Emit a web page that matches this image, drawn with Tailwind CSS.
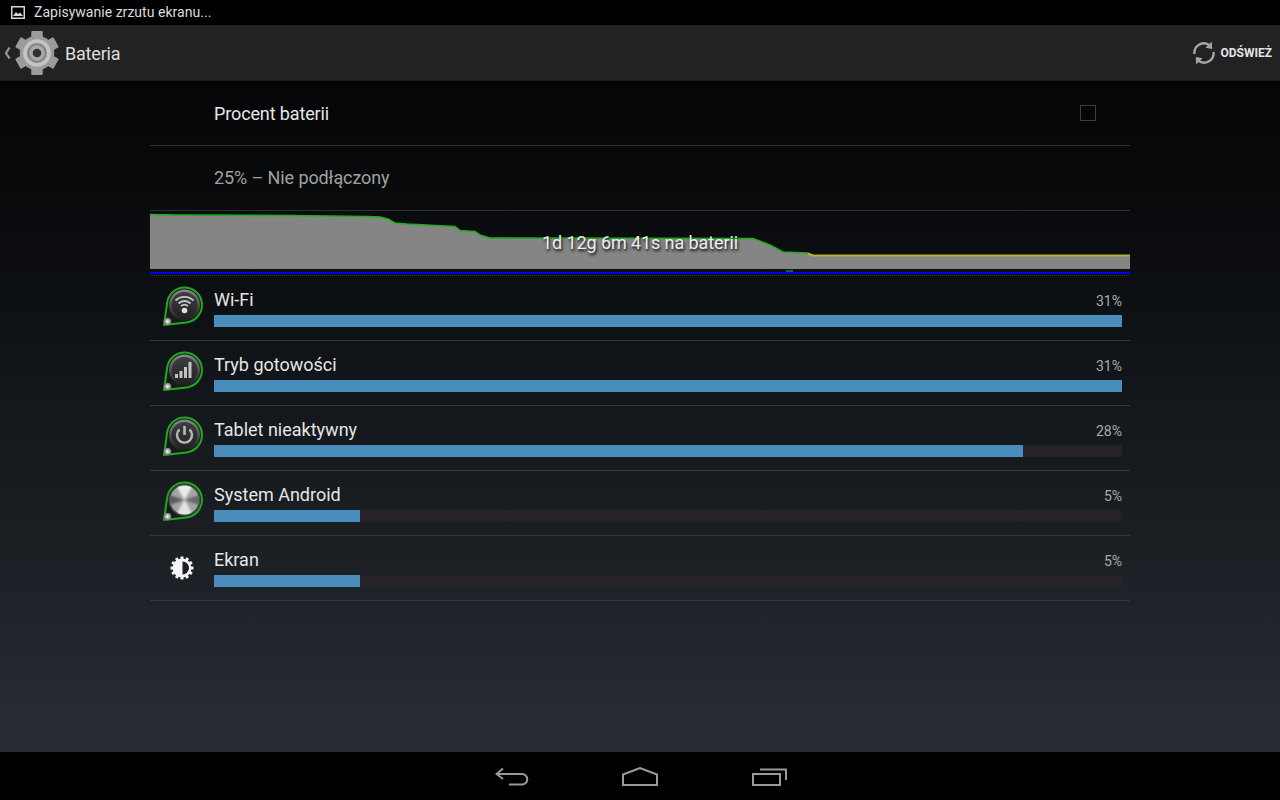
<!DOCTYPE html>
<html lang="pl">
<head>
    <meta charset="UTF-8">
    <title>Bateria</title>
    <script src="https://cdn.jsdelivr.net/npm/@tailwindcss/browser@4"></script>
</head>
<body class="bg-black font-['Roboto',sans-serif]">
<div class="flex h-[800px] w-[1280px] flex-col overflow-hidden">
    <!-- status bar -->
    <div class="flex h-[25px] items-center bg-black pl-[11px] text-[14px] text-[#dcdcdc]">
        <svg class="h-[13px] w-[14px]" viewBox="0 0 14 13">
            <rect x="0.75" y="0.75" width="12.5" height="11.5" fill="none" stroke="#d8d8d8" stroke-width="1.5"/>
            <path d="M2 10 L5 6 L7 8 L9 6.5 L12 10 Z" fill="#d8d8d8"/>
        </svg>
        <span class="ml-[9px] tracking-[0.03px]">Zapisywanie zrzutu ekranu...</span>
    </div>

    <!-- action bar -->
    <div class="flex h-[56px] items-center justify-between border-b border-[#191a1b] bg-[#222222] pr-[8px]">
        <div class="flex items-center">
            <svg class="ml-[4px] h-[14px] w-[7px]" viewBox="0 0 7 14">
                <path d="M5.5 1.5 L2 7 L5.5 12.5" fill="none" stroke="#9a9a9a" stroke-width="2.2"/>
            </svg>
            <svg class="ml-[4px] h-[44px] w-[44px]" viewBox="0 0 46 46">
                <g fill="#9b9b9b">
                    <rect x="17" y="0" width="12" height="46" rx="1"/>
                    <rect x="17" y="0" width="12" height="46" rx="1" transform="rotate(60 23 23)"/>
                    <rect x="17" y="0" width="12" height="46" rx="1" transform="rotate(120 23 23)"/>
                </g>
                <circle cx="23" cy="23" r="18" fill="#9b9b9b"/>
                <circle cx="23" cy="23" r="14.5" fill="#c4c4c4"/>
                <circle cx="23" cy="23" r="10.5" fill="#858585"/>
                <circle cx="23" cy="23" r="8" fill="#a8a8a8"/>
                <circle cx="23" cy="23" r="4.5" fill="#303030"/>
            </svg>
            <span class="ml-[6px] pt-[2px] text-[18px] tracking-[-0.2px] text-[#dedede]">Bateria</span>
        </div>
        <div class="flex items-center">
            <svg class="h-[24px] w-[24px]" viewBox="0 0 24 24" fill="none">
                <path d="M2.5 13 A9.5 9.5 0 0 1 18 4.6" stroke="#a6a6a6" stroke-width="2.4"/>
                <path d="M21.5 11 A9.5 9.5 0 0 1 6 19.4" stroke="#a6a6a6" stroke-width="2.4"/>
                <path d="M19.8 0.5 L20.2 8 L13.5 6.8 Z" fill="#a6a6a6"/>
                <path d="M4.2 23.5 L3.8 16 L10.5 17.2 Z" fill="#a6a6a6"/>
            </svg>
            <span class="ml-[4px] text-[12px] font-bold text-[#e4e4e4]">ODŚWIEŻ</span>
        </div>
    </div>

    <!-- content -->
    <div class="flex-1 bg-linear-to-b from-[#040506] to-[#282d34] px-[150px]">
        <div class="flex h-[65px] items-center justify-between border-b border-[#2c2f33] pr-[34px] pl-[64px] text-[18px] text-[#e6e6e6]">
            <span class="tracking-[-0.13px]">Procent baterii</span>
            <div class="h-[16px] w-[16px] border border-[#3a3f45]"></div>
        </div>
        <div class="flex h-[65px] items-center border-b border-[#2c2f33] pb-[2px] pl-[64px] text-[18px] tracking-[-0.1px] text-[#a0a0a0]">
            25% – Nie podłączony
        </div>

        <!-- chart -->
        <div class="relative h-[65px]">
            <svg class="block h-[65px] w-[980px]" viewBox="150 211 980 65">
                <path d="M150 214.5 L175 215 L292 215.5 L367 216.5 L380 217 L388 219 L395 223 L407 224 L455 226.5 L460 230.5 L475 231.5 L480 235 L490 238 L753 238.5 L770 245 L783 252 L808 253 L813 255 L1130 255 L1130 269 L150 269 Z" fill="#858585"/>
                <path d="M150 214.5 L175 215 L292 215.5 L367 216.5 L380 217 L388 219 L395 223 L407 224 L455 226.5 L460 230.5 L475 231.5 L480 235 L490 238 L753 238.5 L770 245 L783 252 L808 253" fill="none" stroke="#1fae1f" stroke-width="1.6"/>
                <path d="M808 253.5 L813 255.5 L1130 255.5" fill="none" stroke="#b8b42e" stroke-width="2"/>
                <rect x="786" y="270" width="7" height="2" fill="#0b6b2a"/>
                <rect x="150" y="272" width="980" height="2" fill="#0000e6"/>
                <path d="M150 275.5 L1130 275.5" stroke="#3a3d40" stroke-dasharray="1 1"/>
            </svg>
            <span class="absolute top-[22px] left-0 w-full text-center text-[18px] leading-[20px] tracking-[-0.1px] text-[#eeeeee] [text-shadow:1px_2px_3px_#000]">1d 12g 6m 41s na baterii</span>
        </div>

        <!-- usage rows -->
        <div class="relative flex h-[65px] border-b border-[#34383c]">
            <div class="w-[64px] pt-[9px] pl-[10px]">
                <svg class="h-[44px] w-[44px]" viewBox="0 0 44 44">
                    <defs>
                        <linearGradient id="knob" x1="0" y1="0" x2="0" y2="1">
                            <stop offset="0" stop-color="#8a8a8a"/>
                            <stop offset="1" stop-color="#1c1c1c"/>
                        </linearGradient>
                        <linearGradient id="face" x1="0" y1="0" x2="0" y2="1">
                            <stop offset="0" stop-color="#3c3e40"/>
                            <stop offset="1" stop-color="#202224"/>
                        </linearGradient>
                        <radialGradient id="ball">
                            <stop offset="0" stop-color="#ffffff"/>
                            <stop offset="1" stop-color="#6a6a6a"/>
                        </radialGradient>
                        <filter id="soft"><feGaussianBlur stdDeviation="1.1"/></filter>
                        <clipPath id="disc"><circle cx="24.5" cy="20" r="14.5"/></clipPath>
                    </defs>
                    <path d="M4 40 L7.15 17.6 A17.5 17.5 0 1 1 26.45 37.4 Z" fill="#17191b" stroke="#1eaa1e" stroke-width="2" stroke-linejoin="round"/>
                    <circle cx="24.5" cy="20" r="15.5" fill="url(#knob)"/>
                    <circle cx="24.5" cy="20" r="13" fill="url(#face)"/>
                    <circle cx="7.5" cy="36.5" r="3.8" fill="url(#ball)"/>
                    <g fill="none" stroke="#c8c8c8" stroke-width="1.8">
                        <path d="M15.5 15.5 A13 13 0 0 1 33.5 15.5"/>
                        <path d="M18.5 18.5 A8.5 8.5 0 0 1 30.5 18.5"/>
                        <path d="M21 21.2 A5 5 0 0 1 28 21.2"/>
                    </g>
                    <circle cx="24.5" cy="25.5" r="2.8" fill="#e0e0e0"/>
                </svg>
            </div>
            <div class="flex-1 pt-[14px] pr-[8px]">
                <div class="flex h-[25px] items-start justify-between">
                    <span class="text-[18px] leading-[20px] text-[#e6e6e6]">Wi-Fi</span>
                    <span class="text-[14px] leading-[22px] text-[#ababab]">31%</span>
                </div>
                <div class="h-[12px] bg-[#262228]"><div class="h-full w-[908px] bg-[#4a8dbd]"></div></div>
            </div>
        </div>
        <div class="relative flex h-[65px] border-b border-[#34383c]">
            <div class="w-[64px] pt-[9px] pl-[10px]">
                <svg class="h-[44px] w-[44px]" viewBox="0 0 44 44">
                    <path d="M4 40 L7.15 17.6 A17.5 17.5 0 1 1 26.45 37.4 Z" fill="#17191b" stroke="#1eaa1e" stroke-width="2" stroke-linejoin="round"/>
                    <circle cx="24.5" cy="20" r="15.5" fill="url(#knob)"/>
                    <circle cx="24.5" cy="20" r="13" fill="url(#face)"/>
                    <circle cx="7.5" cy="36.5" r="3.8" fill="url(#ball)"/>
                    <g fill="#c4c4c4">
                        <rect x="15" y="24" width="3" height="4"/>
                        <rect x="19.5" y="21" width="3" height="7"/>
                        <rect x="24" y="17" width="3" height="11"/>
                        <rect x="28.5" y="12" width="3" height="16"/>
                    </g>
                </svg>
            </div>
            <div class="flex-1 pt-[14px] pr-[8px]">
                <div class="flex h-[25px] items-start justify-between">
                    <span class="text-[18px] leading-[20px] text-[#e6e6e6]">Tryb gotowości</span>
                    <span class="text-[14px] leading-[22px] text-[#ababab]">31%</span>
                </div>
                <div class="h-[12px] bg-[#262228]"><div class="h-full w-[908px] bg-[#4a8dbd]"></div></div>
            </div>
        </div>
        <div class="relative flex h-[65px] border-b border-[#34383c]">
            <div class="w-[64px] pt-[9px] pl-[10px]">
                <svg class="h-[44px] w-[44px]" viewBox="0 0 44 44">
                    <path d="M4 40 L7.15 17.6 A17.5 17.5 0 1 1 26.45 37.4 Z" fill="#17191b" stroke="#1eaa1e" stroke-width="2" stroke-linejoin="round"/>
                    <circle cx="24.5" cy="20" r="15.5" fill="url(#knob)"/>
                    <circle cx="24.5" cy="20" r="13" fill="url(#face)"/>
                    <circle cx="7.5" cy="36.5" r="3.8" fill="url(#ball)"/>
                    <path d="M19.5 14.5 A7.5 7.5 0 1 0 29.5 14.5" fill="none" stroke="#b8b8b8" stroke-width="2.4"/>
                    <path d="M24.5 11 L24.5 20" stroke="#b8b8b8" stroke-width="2.6"/>
                </svg>
            </div>
            <div class="flex-1 pt-[14px] pr-[8px]">
                <div class="flex h-[25px] items-start justify-between">
                    <span class="text-[18px] leading-[20px] text-[#e6e6e6]">Tablet nieaktywny</span>
                    <span class="text-[14px] leading-[22px] text-[#ababab]">28%</span>
                </div>
                <div class="h-[12px] bg-[#262228]"><div class="h-full w-[809px] bg-[#4a8dbd]"></div></div>
            </div>
        </div>
        <div class="relative flex h-[65px] border-b border-[#34383c]">
            <div class="w-[64px] pt-[9px] pl-[10px]">
                <svg class="h-[44px] w-[44px]" viewBox="0 0 44 44">
                    <path d="M4 40 L7.15 17.6 A17.5 17.5 0 1 1 26.45 37.4 Z" fill="#17191b" stroke="#1eaa1e" stroke-width="2" stroke-linejoin="round"/>
                    <circle cx="24.5" cy="20" r="16" fill="#4a4a4a"/>
                    <g clip-path="url(#disc)">
                        <circle cx="24.5" cy="20" r="14.5" fill="#a3a3a3"/>
                        <g filter="url(#soft)">
                            <path d="M24.5 20 L14 2 H35 Z" fill="#ececec"/>
                            <path d="M24.5 20 L14 38 H35 Z" fill="#e4e4e4"/>
                            <path d="M24.5 20 L6 14 V26 Z" fill="#5c5c5c"/>
                            <path d="M24.5 20 L43 14 V26 Z" fill="#666666"/>
                        </g>
                    </g>
                    <circle cx="7.5" cy="36.5" r="3.8" fill="url(#ball)"/>
                </svg>
            </div>
            <div class="flex-1 pt-[14px] pr-[8px]">
                <div class="flex h-[25px] items-start justify-between">
                    <span class="text-[18px] leading-[20px] text-[#e6e6e6]">System Android</span>
                    <span class="text-[14px] leading-[22px] text-[#ababab]">5%</span>
                </div>
                <div class="h-[12px] bg-[#262228]"><div class="h-full w-[146px] bg-[#4a8dbd]"></div></div>
            </div>
        </div>
        <div class="relative flex h-[65px] border-b border-[#34383c]">
            <div class="w-[64px] pt-[20px] pl-[20px]">
                <svg class="h-[24px] w-[24px]" viewBox="0 0 24 24">
                    <g fill="#f4f4f4">
                        <rect x="10.5" y="0.5" width="3" height="23"/>
                        <rect x="10.5" y="0.5" width="3" height="23" transform="rotate(30 12 12)"/>
                        <rect x="10.5" y="0.5" width="3" height="23" transform="rotate(60 12 12)"/>
                        <rect x="10.5" y="0.5" width="3" height="23" transform="rotate(90 12 12)"/>
                        <rect x="10.5" y="0.5" width="3" height="23" transform="rotate(120 12 12)"/>
                        <rect x="10.5" y="0.5" width="3" height="23" transform="rotate(150 12 12)"/>
                    </g>
                    <circle cx="12" cy="12" r="9.5" fill="#f4f4f4"/>
                    <path d="M12.5 5.5 A6.5 6.5 0 0 1 12.5 18.5 Z" fill="#1b1e22"/>
                </svg>
            </div>
            <div class="flex-1 pt-[14px] pr-[8px]">
                <div class="flex h-[25px] items-start justify-between">
                    <span class="text-[18px] leading-[20px] text-[#e6e6e6]">Ekran</span>
                    <span class="text-[14px] leading-[22px] text-[#ababab]">5%</span>
                </div>
                <div class="h-[12px] bg-[#262228]"><div class="h-full w-[146px] bg-[#4a8dbd]"></div></div>
            </div>
        </div>
    </div>

    <!-- nav bar -->
    <div class="flex h-[48px] items-start justify-center bg-black pt-[15px] pl-[2px]">
        <svg class="h-[20px] w-[34px]" viewBox="0 0 34 20" fill="none" stroke="#9a9a9a" stroke-width="2">
            <path d="M1.5 7 H27 A5 5 0 0 1 27 17.5 H14"/>
            <path d="M8 1.5 L1.5 7 L8 12"/>
        </svg>
        <svg class="ml-[93px] h-[20px] w-[36px]" viewBox="0 0 36 20" fill="none" stroke="#9a9a9a" stroke-width="2">
            <path d="M1 7.5 L18 1 L35 7.5 V18 H1 Z"/>
        </svg>
        <svg class="ml-[94px] h-[20px] w-[36px]" viewBox="0 0 36 20" fill="none" stroke="#9a9a9a" stroke-width="2">
            <rect x="1" y="7" width="27" height="11"/>
            <path d="M8 2.5 H34 V13"/>
        </svg>
    </div>
</div>
</body>
</html>
